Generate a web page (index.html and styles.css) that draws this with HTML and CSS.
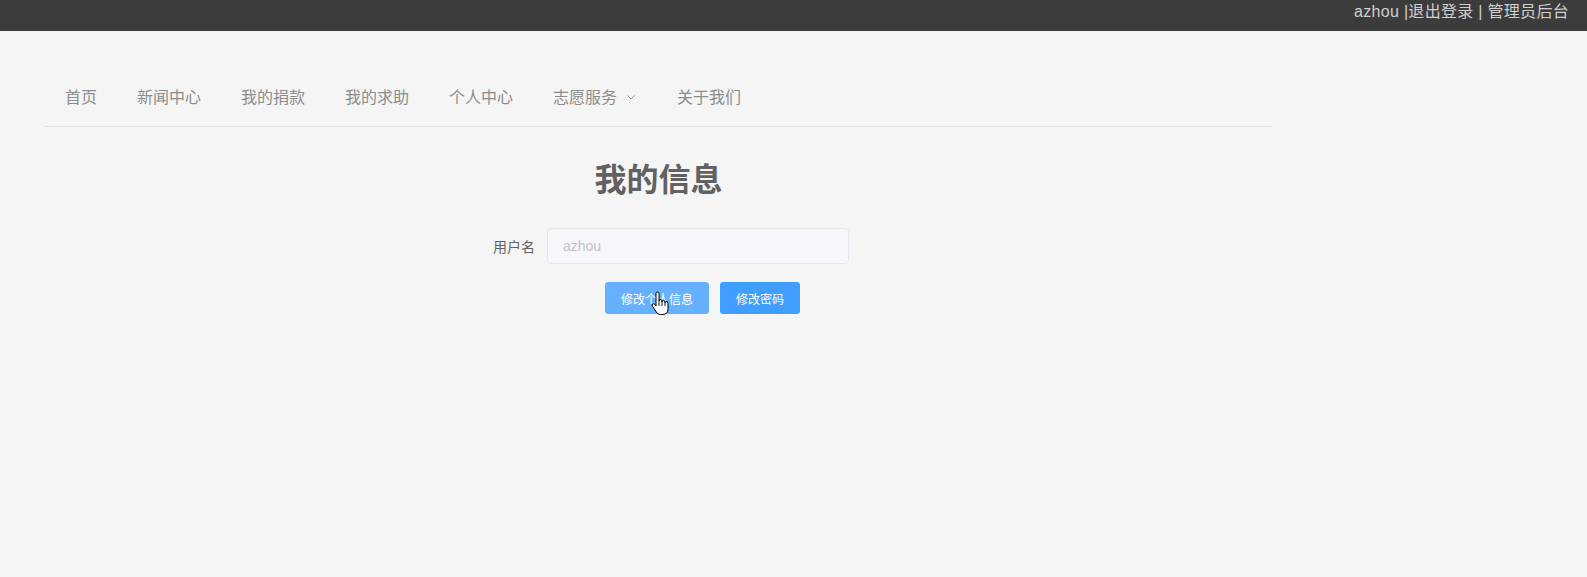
FILE: index.html
```html
<!DOCTYPE html>
<html lang="zh">
<head>
<meta charset="utf-8">
<title>我的信息</title>
<link rel="stylesheet" href="styles.css">
</head>
<body>
<header class="topbar">
  <span class="user-links">azhou |退出登录 | 管理员后台</span>
</header>
<div class="page">
  <nav class="menu">
    <a class="menu-item">首页</a>
    <a class="menu-item">新闻中心</a>
    <a class="menu-item">我的捐款</a>
    <a class="menu-item">我的求助</a>
    <a class="menu-item">个人中心</a>
    <a class="menu-item">志愿服务<svg class="arrow" viewBox="0 0 12 12" width="12" height="12"><path d="M2.5 4.5 L6 8 L9.5 4.5" fill="none" stroke="#909399" stroke-width="1"/></svg></a>
    <a class="menu-item">关于我们</a>
  </nav>
  <h1 class="title">我的信息</h1>
  <form class="info-form">
    <div class="form-item">
      <label class="form-label">用户名</label>
      <input class="form-input" type="text" value="azhou" disabled>
    </div>
    <div class="form-actions">
      <button type="button" class="btn btn-hover">修改个人信息<svg class="cursor" viewBox="0 0 18 25" width="18" height="25"><path d="M5 2.5 a1.5 1.5 0 0 1 3 0 V10 a1.5 1.5 0 0 1 3 0 V11 a1.5 1.5 0 0 1 3 0 V12 a1.5 1.5 0 0 1 3 0 V18 c0 3.2 -2 5.5 -5 5.5 H9.5 c-2 0 -3.2 -1 -4.2 -2.5 L1.4 15 a1.4 1.4 0 0 1 2.3 -1.6 L5 15 Z" fill="#fff" stroke="#000" stroke-width="1" stroke-linejoin="round"/><path d="M8 10 V15 M11 11 V15 M14 12 V15" stroke="#000" stroke-width="0.9" fill="none"/></svg></button>
      <button type="button" class="btn">修改密码</button>
    </div>
  </form>
</div>
</body>
</html>
```
FILE: styles.css
```css
* { box-sizing: border-box; }
html, body { margin: 0; padding: 0; }
body {
  background: #f5f5f5;
  font-family: "Microsoft YaHei", "Noto Sans CJK SC", "Liberation Sans", sans-serif;
  height: 577px;
}
.topbar {
  height: 31px;
  background: #3c3c3c;
  display: flex;
  justify-content: flex-end;
  padding-right: 18px;
}
.user-links {
  color: #cfcfcf;
  font-size: 16px;
  line-height: 24px;
  letter-spacing: 0.3px;
  font-family: "Liberation Sans", "Noto Sans CJK SC", sans-serif;
}
.page {
  width: 1227px;
  margin-left: 45px;
  padding-top: 35px;
}
.menu {
  display: flex;
  height: 61px;
  border-bottom: 1px solid #e3e3e3;
}
.menu-item {
  display: flex;
  align-items: center;
  padding: 0 20px;
  height: 60px;
  font-size: 16px;
  color: #8c8c8c;
  cursor: pointer;
  font-family: "Noto Sans CJK SC", sans-serif;
}
.arrow { margin-left: 8px; margin-top: 1px; }
.title {
  margin: 30px 0 0;
  text-align: center;
  font-size: 32px;
  line-height: 40px;
  color: #616161;
  font-weight: bold;
  font-family: "Noto Sans CJK SC", sans-serif;
}
.info-form {
  margin-left: 402px;
  width: 402px;
  margin-top: 31px;
}
.form-item {
  display: flex;
  align-items: center;
  height: 36px;
}
.form-label {
  width: 100px;
  padding-right: 12px;
  text-align: right;
  font-size: 14px;
  color: #606266;
  font-family: "Noto Sans CJK SC", sans-serif;
}
.form-input {
  width: 302px;
  height: 36px;
  border: 1px solid #e4e7ed;
  border-radius: 4px;
  background: #f5f7fa;
  color: #c0c4cc;
  font-size: 14px;
  padding: 0 15px;
  font-family: "Liberation Sans", sans-serif;
}
.form-actions {
  display: flex;
  gap: 11px;
  margin-top: 18px;
  padding-left: 158px;
}
.btn {
  position: relative;
  height: 32px;
  padding: 0 15px;
  border: 1px solid #409eff;
  background: #409eff;
  color: #fff;
  font-size: 12px;
  border-radius: 3px;
  font-family: "Noto Sans CJK SC", sans-serif;
}
.btn-hover {
  background: #66b1ff;
  border-color: #66b1ff;
}
.cursor {
  position: absolute;
  left: 45px;
  top: 8px;
}
```
